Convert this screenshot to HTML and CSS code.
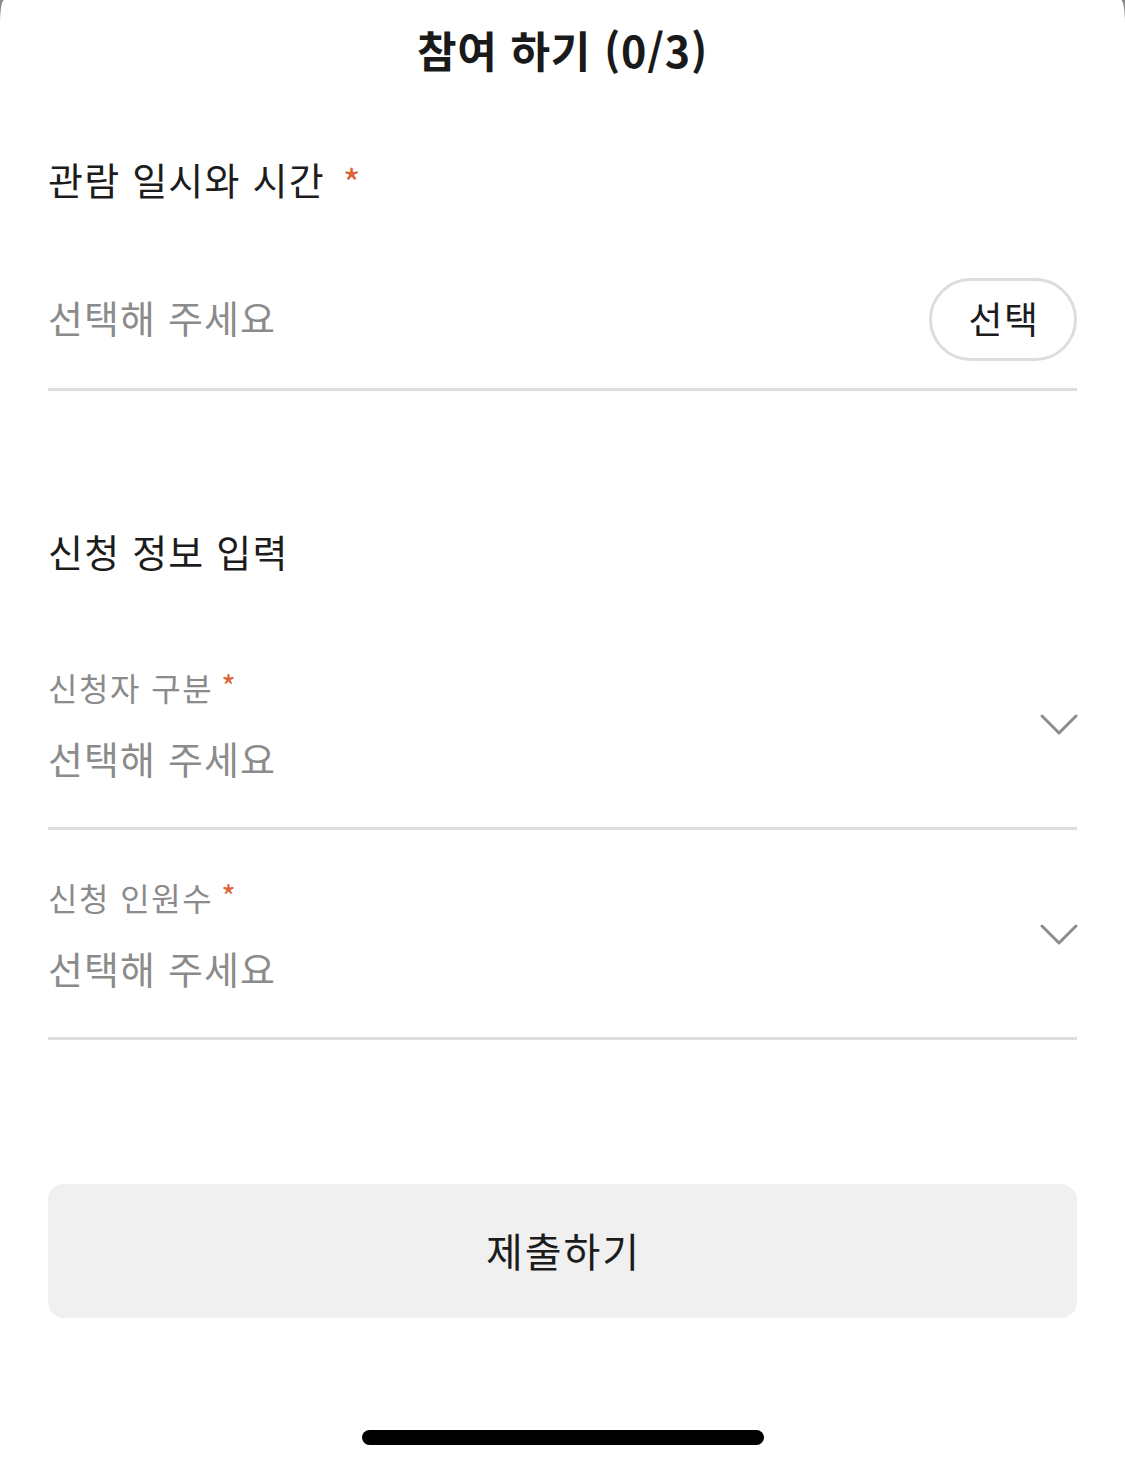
FILE: index.html
```html
<!DOCTYPE html>
<html lang="ko">
<head>
<meta charset="utf-8">
<title>참여 하기</title>
<link rel="stylesheet" href="styles.css">
</head>
<body>
<div class="sheet">
  <header class="header"><h1 class="title">참여 하기 (0/3)</h1></header>

  <div class="section-label">관람 일시와 시간<span class="req req-lg">*</span></div>

  <div class="date-row">
    <span class="placeholder">선택해 주세요</span>
    <button class="pill">선택</button>
  </div>

  <h2 class="section-title">신청 정보 입력</h2>

  <div class="field first">
    <div class="field-body">
      <div class="field-label">신청자 구분<span class="req req-sm">*</span></div>
      <div class="placeholder value">선택해 주세요</div>
    </div>
    <svg class="chev" viewBox="0 0 38 22" width="38" height="22"><polyline points="2,2 19,19 36,2" fill="none" stroke="#8c8c8c" stroke-width="3" stroke-linecap="round" stroke-linejoin="round"/></svg>
  </div>

  <div class="field">
    <div class="field-body">
      <div class="field-label">신청 인원수<span class="req req-sm">*</span></div>
      <div class="placeholder value">선택해 주세요</div>
    </div>
    <svg class="chev" viewBox="0 0 38 22" width="38" height="22"><polyline points="2,2 19,19 36,2" fill="none" stroke="#8c8c8c" stroke-width="3" stroke-linecap="round" stroke-linejoin="round"/></svg>
  </div>

  <button class="submit">제출하기</button>

  <div class="home-wrap"><div class="home-indicator"></div></div>
</div>
</body>
</html>
```

FILE: styles.css
```css
html, body {
  margin: 0;
  padding: 0;
}
body {
  background: #8a8a8a;
  font-family: "Noto Sans CJK KR", "Noto Sans", sans-serif;
  color: #1c1c1c;
}
.sheet {
  background: #ffffff;
  width: 1125px;
  height: 1469px;
  box-sizing: border-box;
  padding: 0 48px;
  border-radius: 4px 4px 0 0 / 24px 24px 0 0;
  display: flex;
  flex-direction: column;
}
.header {
  height: 98px;
  display: flex;
  align-items: center;
  justify-content: center;
}
.title {
  margin: 0;
  font-size: 43px;
  font-weight: 700;
  letter-spacing: 0.8px;
  line-height: 1;
  color: #1a1a1a;
}
.section-label {
  margin-top: 53px;
  height: 60px;
  box-sizing: border-box;
  padding-bottom: 4px;
  display: flex;
  align-items: center;
  font-size: 38px;
  letter-spacing: 1.2px;
  line-height: 1;
  color: #1c1c1c;
}
.req {
  color: #dd6136;
  align-self: flex-start;
  line-height: 1;
  letter-spacing: 0;
}
.req-lg {
  font-size: 38px;
  margin-left: 18px;
  margin-top: 12px;
}
.req-sm {
  font-size: 31px;
  margin-left: 8px;
  margin-top: 2px;
}
.date-row {
  margin-top: 67px;
  display: flex;
  align-items: center;
  justify-content: space-between;
  padding-bottom: 27px;
  border-bottom: 3px solid #dddddd;
}
.placeholder {
  font-size: 38px;
  letter-spacing: 1.1px;
  line-height: 1;
  color: #8b8b8b;
  padding-bottom: 5px;
}
.pill {
  width: 148px;
  height: 83px;
  box-sizing: border-box;
  border: 3px solid #dddddd;
  border-radius: 42px;
  background: #ffffff;
  font-family: inherit;
  font-size: 37px;
  letter-spacing: 1.5px;
  line-height: 1;
  color: #1c1c1c;
  padding: 0 0 2px 2px;
}
.section-title {
  margin: 132px 0 0;
  height: 60px;
  box-sizing: border-box;
  padding-bottom: 4px;
  display: flex;
  align-items: center;
  font-size: 38px;
  letter-spacing: 1.2px;
  font-weight: 400;
  line-height: 1;
  color: #1c1c1c;
}
.field {
  display: flex;
  align-items: center;
  justify-content: space-between;
  padding: 48px 0 45px;
  border-bottom: 3px solid #dddddd;
}
.field.first {
  margin-top: 37px;
}
.field-body {
  display: flex;
  flex-direction: column;
  gap: 30px;
}
.field-label {
  height: 40px;
  box-sizing: border-box;
  padding-bottom: 3px;
  display: flex;
  align-items: center;
  font-size: 32px;
  letter-spacing: 1.5px;
  line-height: 1;
  color: #8b8b8b;
}
.value {
  height: 44px;
  box-sizing: border-box;
  display: flex;
  align-items: center;
}
.chev {
  display: block;
  margin-right: -1px;
}
.submit {
  margin-top: 144px;
  height: 134px;
  width: 100%;
  border: none;
  border-radius: 16px;
  background: #f0f0f0;
  font-family: inherit;
  font-size: 40px;
  letter-spacing: 2px;
  line-height: 1;
  color: #1c1c1c;
  padding: 0 0 2px 2px;
}
.home-wrap {
  margin-top: 112px;
  display: flex;
  justify-content: center;
}
.home-indicator {
  width: 402px;
  height: 15px;
  border-radius: 8px;
  background: #000000;
}
```
